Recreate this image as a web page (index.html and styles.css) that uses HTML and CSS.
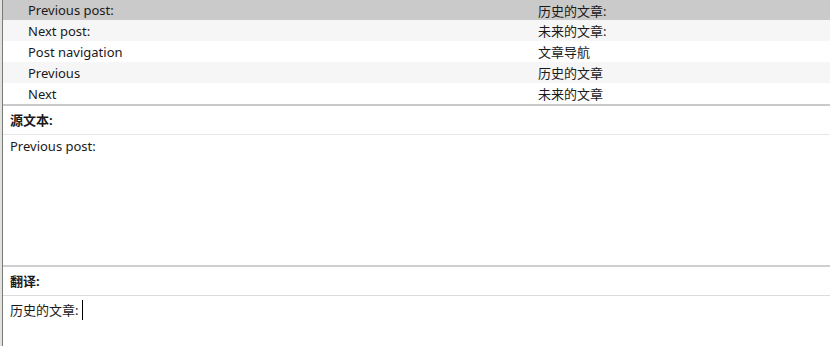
FILE: index.html
```html
<!DOCTYPE html>
<html lang="zh-CN">
<head>
  <meta charset="UTF-8" />
  <title>翻译编辑器</title>
  <link rel="stylesheet" href="styles.css">
</head>
<body>

  <div class="app">
    <!-- 字符串列表 -->
    <div class="list">
      <div class="row selected"><span class="src">Previous post:</span><span class="dst">历史的文章:</span></div>
      <div class="row alt"><span class="src">Next post:</span><span class="dst">未来的文章:</span></div>
      <div class="row"><span class="src">Post navigation</span><span class="dst">文章导航</span></div>
      <div class="row alt"><span class="src">Previous</span><span class="dst">历史的文章</span></div>
      <div class="row"><span class="src">Next</span><span class="dst">未来的文章</span></div>
    </div>

    <!-- 源文本 -->
    <div class="pane-title">源文本:</div>
    <div class="pane source">Previous post:</div>

    <!-- 翻译 -->
    <div class="pane-title second">翻译:</div>
    <div class="pane target">历史的文章:<span class="caret"></span></div>
  </div>

</body>
</html>
```

FILE: styles.css
```css
* {
  box-sizing: border-box;
  margin: 0;
  padding: 0;
}

html {
  background: #dfe3dc;
}

body {
  font-family: "Noto Sans", "Noto Sans CJK SC", sans-serif;
  font-size: 13px;
  color: #1a1a1a;
  height: 346px;
  overflow: hidden;
}

.app {
  margin-left: 2px;
  border-left: 1px solid #7a7a7a;
  background: #fff;
  height: 346px;
  display: flex;
  flex-direction: column;
}

.list {
  border-bottom: 2px solid #c9c9c9;
}

.row {
  display: flex;
  align-items: center;
  height: 21px;
  padding-left: 25px;
  background: #fff;
}

.row.selected {
  background: #cacaca;
  height: 20px;
}

.row.alt {
  background: #f6f6f6;
}

.src {
  width: 510px;
}

.pane-title {
  font-weight: bold;
  height: 29px;
  line-height: 28px;
  padding-left: 7px;
  border-bottom: 1px solid #e6e6e6;
}

.pane-title.second {
  border-bottom: 1px solid #dcdcdc;
}

.pane {
  padding: 1px 7px;
  line-height: 20px;
}

.source {
  height: 132px;
  border-bottom: 2px solid #cfcfcf;
}

.target {
  padding-top: 4px;
  flex: 1;
  display: flex;
  align-items: flex-start;
}

.caret {
  display: inline-block;
  width: 1px;
  height: 20px;
  margin-left: 4px;
  background: #000;
}
```
